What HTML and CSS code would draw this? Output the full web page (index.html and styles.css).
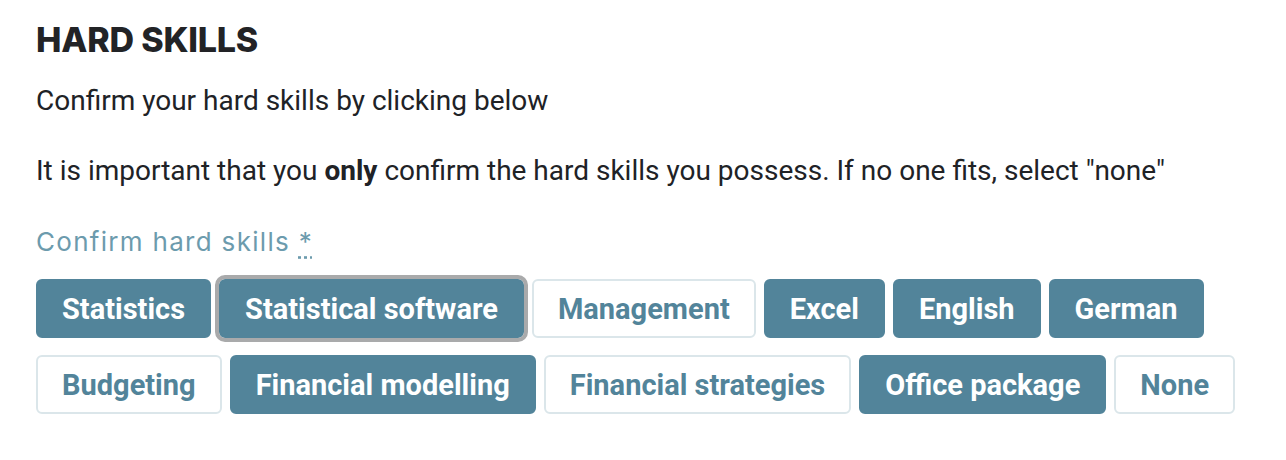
FILE: index.html
```html
<!DOCTYPE html>
<html lang="en">
<head>
    <meta charset="UTF-8">
    <meta name="viewport" content="width=device-width, initial-scale=1.0">
    <title>Hard skills</title>
    <link rel="stylesheet" href="styles.css">
</head>
<body>
    <div class="section">
        <h2 class="title">HARD SKILLS</h2>
        <p>Confirm your hard skills by clicking below</p>
        <p class="note">It is important that you <strong>only</strong> confirm the hard skills you possess. If no one fits, select "none"</p>
        <label class="field-label">Confirm hard skills <abbr title="required">*</abbr></label>
        <div class="skills">
            <button class="skill on">Statistics</button>
            <button class="skill on focus">Statistical software</button>
            <button class="skill">Management</button>
            <button class="skill on">Excel</button>
            <button class="skill on">English</button>
            <button class="skill on">German</button>
            <button class="skill">Budgeting</button>
            <button class="skill on">Financial modelling</button>
            <button class="skill">Financial strategies</button>
            <button class="skill on">Office package</button>
            <button class="skill">None</button>
        </div>
    </div>
</body>
</html>
```

FILE: styles.css
```css
body {
    margin: 0;
    background: #fff;
    font-family: Roboto, "Liberation Sans", sans-serif;
    color: #202226;
}
.section {
    padding: 19px 36px;
}
.title {
    font-family: Inter, sans-serif;
    font-weight: 800;
    font-size: 34px;
    line-height: 41px;
    letter-spacing: -0.2px;
    margin: 0 0 24px;
    color: #222326;
}
p {
    font-size: 28px;
    line-height: 34px;
    margin: 0 0 36px;
}
p.note {
    margin-bottom: 38px;
}
.field-label {
    display: block;
    font-family: Inter, sans-serif;
    font-size: 26px;
    line-height: 32px;
    letter-spacing: 1.3px;
    color: #6c9bad;
    margin: 0 0 21px;
}
.field-label abbr {
    text-decoration: underline dotted;
    text-underline-offset: 5px;
}
.skills {
    display: flex;
    flex-wrap: wrap;
    gap: 17px 8px;
    max-width: 1210px;
}
.skill {
    font-family: Roboto, sans-serif;
    font-weight: 700;
    font-size: 29px;
    height: 59px;
    padding: 0 24px;
    border-radius: 6px;
    border: 2px solid #dbe6ea;
    background: #fff;
    color: #52849a;
    cursor: pointer;
}
.skill.on {
    background: #52849a;
    border-color: #52849a;
    color: #fff;
}
.skill.focus {
    outline: 4px solid #a9aaab;
    outline-offset: 0;
}
```
